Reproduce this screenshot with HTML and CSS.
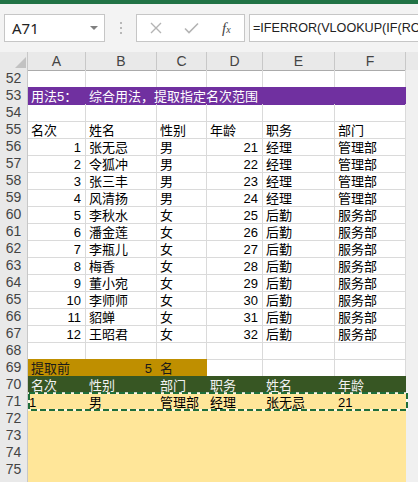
FILE: index.html
```html
<!DOCTYPE html>
<html lang="zh">
<head>
<meta charset="utf-8">
<link rel="stylesheet" href="styles.css">
</head>
<body>
<div class="topbar"></div>
<div class="fbar">
  <div class="namebox"><span>A71</span><span class="caret"></span></div>
  <div class="sep"><i></i><i></i><i></i></div>
  <div class="btns">
    <svg class="ic-x" width="12" height="12" viewBox="0 0 12 12"><path d="M1 1 L11 11 M11 1 L1 11" stroke="#b4b4b4" stroke-width="1.4" fill="none"/></svg>
    <svg class="ic-ok" width="15" height="12" viewBox="0 0 15 12"><path d="M1 6.5 L5 10.5 L14 1.5" stroke="#b4b4b4" stroke-width="1.6" fill="none"/></svg>
    <span class="fx">f<sub>x</sub></span>
  </div>
  <div class="formula">=IFERROR(VLOOKUP(IF(ROW()-70&gt;$B$69,"",ROW()-70)</div>
</div>
<div class="sheet">
  <div class="r colhdr">
    <div class="corner"><svg width="28" height="18" viewBox="0 0 28 18"><path d="M26 5 L26 16 L15 16 Z" fill="#c2c2c2"/></svg></div>
    <div class="ch">A</div><div class="ch">B</div><div class="ch">C</div><div class="ch">D</div><div class="ch">E</div><div class="ch">F</div><div class="ch g"></div>
  </div>

  <div class="r"><div class="h">52</div><div class="c"></div><div class="c"></div><div class="c"></div><div class="c"></div><div class="c"></div><div class="c"></div><div class="sb"></div></div>
  <div class="r"><div class="h">53</div><div class="c fp">用法5：</div><div class="c fp span5">综合用法，提取指定名次范围</div><div class="sb"></div></div>
  <div class="r"><div class="h">54</div><div class="c"></div><div class="c"></div><div class="c"></div><div class="c"></div><div class="c"></div><div class="c"></div><div class="sb"></div></div>
  <div class="r"><div class="h">55</div><div class="c">名次</div><div class="c">姓名</div><div class="c">性别</div><div class="c">年龄</div><div class="c">职务</div><div class="c">部门</div><div class="sb"></div></div>
  <div class="r"><div class="h">56</div><div class="c n">1</div><div class="c">张无忌</div><div class="c">男</div><div class="c n">21</div><div class="c">经理</div><div class="c">管理部</div><div class="sb"></div></div>
  <div class="r"><div class="h">57</div><div class="c n">2</div><div class="c">令狐冲</div><div class="c">男</div><div class="c n">22</div><div class="c">经理</div><div class="c">管理部</div><div class="sb"></div></div>
  <div class="r"><div class="h">58</div><div class="c n">3</div><div class="c">张三丰</div><div class="c">男</div><div class="c n">23</div><div class="c">经理</div><div class="c">管理部</div><div class="sb"></div></div>
  <div class="r"><div class="h">59</div><div class="c n">4</div><div class="c">风清扬</div><div class="c">男</div><div class="c n">24</div><div class="c">经理</div><div class="c">管理部</div><div class="sb"></div></div>
  <div class="r"><div class="h">60</div><div class="c n">5</div><div class="c">李秋水</div><div class="c">女</div><div class="c n">25</div><div class="c">后勤</div><div class="c">服务部</div><div class="sb"></div></div>
  <div class="r"><div class="h">61</div><div class="c n">6</div><div class="c">潘金莲</div><div class="c">女</div><div class="c n">26</div><div class="c">后勤</div><div class="c">服务部</div><div class="sb"></div></div>
  <div class="r"><div class="h">62</div><div class="c n">7</div><div class="c">李瓶儿</div><div class="c">女</div><div class="c n">27</div><div class="c">后勤</div><div class="c">服务部</div><div class="sb"></div></div>
  <div class="r"><div class="h">63</div><div class="c n">8</div><div class="c">梅香</div><div class="c">女</div><div class="c n">28</div><div class="c">后勤</div><div class="c">服务部</div><div class="sb"></div></div>
  <div class="r"><div class="h">64</div><div class="c n">9</div><div class="c">董小宛</div><div class="c">女</div><div class="c n">29</div><div class="c">后勤</div><div class="c">服务部</div><div class="sb"></div></div>
  <div class="r"><div class="h">65</div><div class="c n">10</div><div class="c">李师师</div><div class="c">女</div><div class="c n">30</div><div class="c">后勤</div><div class="c">服务部</div><div class="sb"></div></div>
  <div class="r"><div class="h">66</div><div class="c n">11</div><div class="c">貂蝉</div><div class="c">女</div><div class="c n">31</div><div class="c">后勤</div><div class="c">服务部</div><div class="sb"></div></div>
  <div class="r"><div class="h">67</div><div class="c n">12</div><div class="c">王昭君</div><div class="c">女</div><div class="c n">32</div><div class="c">后勤</div><div class="c">服务部</div><div class="sb"></div></div>
  <div class="r"><div class="h">68</div><div class="c"></div><div class="c"></div><div class="c"></div><div class="c"></div><div class="c"></div><div class="c"></div><div class="sb"></div></div>
  <div class="r"><div class="h">69</div><div class="c fo">提取前</div><div class="c fo n">5</div><div class="c fo">名</div><div class="c"></div><div class="c"></div><div class="c"></div><div class="sb"></div></div>
  <div class="r"><div class="h">70</div><div class="c fg">名次</div><div class="c fg">性别</div><div class="c fg">部门</div><div class="c fg">职务</div><div class="c fg">姓名</div><div class="c fg">年龄</div><div class="sb"></div></div>
  <div class="r"><div class="h">71</div><div class="c fy t1">1</div><div class="c fy">男</div><div class="c fy">管理部</div><div class="c fy">经理</div><div class="c fy">张无忌</div><div class="c fy">21</div><div class="sb"></div></div>
  <div class="r"><div class="h">72</div><div class="c fy"></div><div class="c fy"></div><div class="c fy"></div><div class="c fy"></div><div class="c fy"></div><div class="c fy"></div><div class="sb"></div></div>
  <div class="r"><div class="h">73</div><div class="c fy"></div><div class="c fy"></div><div class="c fy"></div><div class="c fy"></div><div class="c fy"></div><div class="c fy"></div><div class="sb"></div></div>
  <div class="r"><div class="h">74</div><div class="c fy"></div><div class="c fy"></div><div class="c fy"></div><div class="c fy"></div><div class="c fy"></div><div class="c fy"></div><div class="sb"></div></div>
  <div class="r"><div class="h">75</div><div class="c fy"></div><div class="c fy"></div><div class="c fy"></div><div class="c fy"></div><div class="c fy"></div><div class="c fy"></div><div class="sb"></div></div>
  <div class="r"><div class="h"></div><div class="c fy"></div><div class="c fy"></div><div class="c fy"></div><div class="c fy"></div><div class="c fy"></div><div class="c fy"></div><div class="sb"></div></div>

  <svg class="ants" width="380" height="19" viewBox="0 0 380 19">
    <rect x="1" y="1" width="378" height="17" fill="none" stroke="#ffffff" stroke-opacity="0.75" stroke-width="2"/>
    <rect x="1" y="1" width="378" height="17" fill="none" stroke="#1f6e3b" stroke-width="2" stroke-dasharray="6 3"/>
  </svg>
</div>
</body>
</html>
```
FILE: styles.css
```css
html, body {
  margin: 0;
  padding: 0;
}
body {
  width: 418px;
  height: 482px;
  overflow: hidden;
  background: #ffffff;
  font-family: "Liberation Sans", "Noto Sans CJK SC", sans-serif;
  color: #000;
}
.topbar {
  height: 4px;
  background: #217346;
}
.fbar {
  height: 48px;
  box-sizing: border-box;
  padding-top: 10px;
  background: #f3f3f3;
  display: flex;
  align-items: flex-start;
}
.namebox {
  margin-left: 4px;
  width: 101px;
  height: 28px;
  box-sizing: border-box;
  border: 1px solid #c6c6c6;
  background: #fff;
  display: flex;
  align-items: center;
  justify-content: space-between;
  padding: 0 6px 0 7px;
  font: 15px "Noto Sans", sans-serif;
  color: #222;
}
.caret {
  width: 0;
  height: 0;
  border-left: 4px solid transparent;
  border-right: 4px solid transparent;
  border-top: 4px solid #808080;
}
.sep {
  width: 31px;
  height: 28px;
  display: flex;
  flex-direction: column;
  align-items: center;
  justify-content: center;
  gap: 3px;
}
.sep i {
  display: block;
  width: 2px;
  height: 2px;
  background: #b8b8b8;
}
.btns {
  width: 109px;
  height: 28px;
  box-sizing: border-box;
  border: 1px solid #c6c6c6;
  background: #fff;
  display: flex;
  align-items: center;
}
.ic-x {
  margin-left: 13px;
}
.ic-ok {
  margin-left: 22px;
}
.fx {
  margin-left: 23px;
  font: italic 15px "Liberation Serif", serif;
  color: #444;
  line-height: 1;
}
.fx sub {
  font-size: 10px;
  vertical-align: 0;
}
.formula {
  margin-left: 4px;
  flex: 1;
  height: 28px;
  box-sizing: border-box;
  border: 1px solid #c6c6c6;
  border-right: none;
  background: #fff;
  padding-left: 3px;
  font: 12.6px/26px "Liberation Sans", sans-serif;
  color: #222;
  white-space: nowrap;
  overflow: hidden;
}
.sheet {
  position: relative;
}
.r {
  display: grid;
  grid-template-columns: 28px 58px 71px 50px 56px 72px 71px 12px;
  height: 17px;
}
.colhdr {
  height: 18px;
  background: #e9e9e9;
}
.corner {
  border-bottom: 1px solid #ababab;
  box-sizing: border-box;
  border-right: 1px solid #c8c8c8;
}
.corner svg {
  display: block;
}
.ch {
  box-sizing: border-box;
  border-bottom: 1px solid #ababab;
  border-right: 1px solid #c8c8c8;
  text-align: center;
  font: 14px/18px "Liberation Sans", sans-serif;
  color: #444;
}
.ch.g {
  border-right: none;
}
.h {
  box-sizing: border-box;
  background: #e9e9e9;
  border-right: 1px solid #c8c8c8;
  border-bottom: 1px solid #d6d6d6;
  text-align: center;
  font: 14px/17px "Liberation Sans", sans-serif;
  color: #444;
}
.c {
  box-sizing: border-box;
  border-right: 1px solid #dadada;
  border-bottom: 1px solid #dadada;
  padding: 3px 3px 0 3px;
  font-size: 13px;
  line-height: 14px;
  white-space: nowrap;
  overflow: hidden;
}
.c.n {
  text-align: right;
  padding-right: 4px;
}
.c.t1 {
  padding-left: 1px;
}
.span5 {
  grid-column: span 5;
}
.fp {
  background: #7030a0;
  border-color: #7030a0;
  color: #fff;
}
.fo {
  background: #bf8f00;
  border-color: #bf8f00;
  color: #1a1a1a;
}
.fg {
  background: #375623;
  border-color: #375623;
  color: #f2f2f2;
}
.fy {
  background: #ffe699;
  border-color: #ffe699;
}
.sb {
  background: #f0f0f0;
}
.ants {
  position: absolute;
  left: 28px;
  top: 340px;
}
```
